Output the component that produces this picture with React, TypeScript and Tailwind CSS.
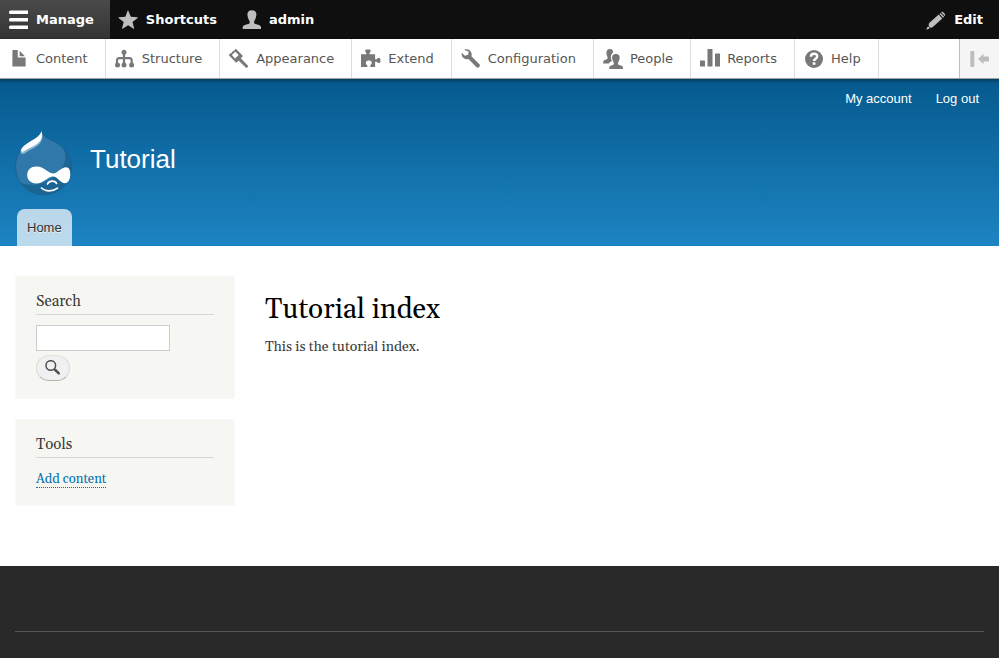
import type { ReactNode } from "react";

function Icon({ children, className = "" }: { children: ReactNode; className?: string }) {
  return (
    <svg viewBox="0 0 20 20" className={`size-5 shrink-0 fill-current ${className}`} aria-hidden="true">
      {children}
    </svg>
  );
}

const icons: Record<string, ReactNode> = {
  content: (
    <>
      <path d="M4 1h4.200c.4 0 .6.2.6.6v6.200c0 .4.2.6.6.6h6.600c.4 0 .6.2.6.6v8c0 .4-.2.6-.6.6H4c-.4 0-.6-.2-.6-.6V1.600c0-.4.2-.6.6-.6z" />
      <path d="M10.600 1.700l5.300 5.500h-5.300z" />
    </>
  ),
  structure: (
    <>
      <circle cx="9" cy="3.300" r="2.500" />
      <circle cx="2.500" cy="16" r="2.500" />
      <circle cx="9" cy="16" r="2.500" />
      <circle cx="16.600" cy="16" r="2.500" />
      <path
        d="M9 4v12M2 15v-3.500c0-1.600.8-2.400 2.300-2.400h10.100c1.500 0 2.300.8 2.300 2.400V15"
        fill="none"
        stroke="currentColor"
        strokeWidth="2.200"
      />
    </>
  ),
  appearance: (
    <>
      <path
        fillRule="evenodd"
        d="M7.300.2l6.200 6.200c.4.4.4.800 0 1.200l-5.600 5.600c-.4.4-.8.4-1.200 0L.3 6.700c-.4-.4-.4-.8 0-1.200L2.200 3.700l.8.300.2-1.300 1.200-1 .9.300.2-1.200.7-.6c.3-.3.800-.3 1.100 0zM6.300 2.700L2.800 6.100l3.200 3.400 3.700-3.400z"
      />
      <path d="M9 11l2.200-2.200 7.800 7.900c.7.700-1.300 2.700-2 2z" />
    </>
  ),
  extend: (
    <path d="M0 5.200h5.300V3.700C4 3.200 3.600.8 5.300.5h3.200c1.800.3 1.400 2.600 0 3.200v1.500h5.600v5h1.600c.6-1.500 3.500-1.700 3.700.2v2c-.1 2-3 1.900-3.700.4h-1.600v5.300H9.300v-1.800c2.200-.9 2-4.500-1-4.700h-1c-3 .2-3 3.800-1 4.700v1.800H0z" />
  ),
  configuration: (
    <path d="M3.100.7C5.500-.1 8.200.3 9.700 2.500c1.100 1.600 1.200 3.100.7 4.800l8 8c1.600 1.700-1.200 4.500-2.900 2.900l-8-8.100c-1.700.5-3.500.2-4.900-1C1 7.700.4 5.700.7 3.700l3.200 3 3.100-.9.800-3z" />
  ),
  people: (
    <>
      <path d="M6.900 0C9.300 0 10.200 1.400 10 3.500 8.200 5 7.500 7.300 8.100 9.800c.2.900.5 1.600.9 2.300-1.300.6-2.400 1-3.100 2.300H.2c0-1-.1-2 .5-2.600.9-1 3.300-.9 3.800-2.200.4-1-.4-2.200-.7-3.300C3 3.200 3.500 0 6.900 0z" />
      <path d="M12.900 4.900c3.200 0 4.300 2.500 3.600 5.100-.3 1.400-.6 2.400-1.300 3.400-.5.900-.3 1.900.5 2.300 1.300.7 3.600.6 4.100 2.200.2.600.2 1.300.2 2H6.200c0-.7 0-1.400.2-2 .5-1.600 2.700-1.500 3.800-2.200.7-.4.900-1.400.4-2.300-.7-1-1-2-1.300-3.400-.7-2.600.4-5.100 3.600-5.100z" />
    </>
  ),
  reports: (
    <>
      <rect x="0" y="11.500" width="5" height="6" rx=".5" />
      <rect x="7.500" y="0" width="5" height="17.500" rx=".5" />
      <rect x="15" y="4.500" width="5" height="13" rx=".5" />
    </>
  ),
  help: (
    <>
      <circle cx="10" cy="10" r="9" />
      <path d="M6.900 7.700c0-4.100 6.300-3.900 6.300-.4 0 2.400-3.100 2.500-3.100 4.700" fill="none" stroke="white" strokeWidth="2.500" />
      <rect x="8.800" y="13.300" width="2.600" height="2.500" fill="white" />
    </>
  ),
};

const trayItems = ["Content", "Structure", "Appearance", "Extend", "Configuration", "People", "Reports", "Help"];

function Toolbar() {
  const tab = "flex h-[39px] items-center gap-2 pl-2 pr-4 font-bold text-white";
  return (
    <nav aria-label="Administration" className="relative font-['DejaVu_Sans',sans-serif] text-[13px] leading-5">
      <div className="flex bg-[#0f0f0f]">
        <button type="button" className={`${tab} bg-linear-to-b from-[#4a4a4a] to-[#343434]`}>
          <Icon>
            <rect x="1" y=".5" width="20" height="3.500" rx="1.500" />
            <rect x="1" y="8" width="20" height="3.500" rx="1.500" />
            <rect x="1" y="15.500" width="20" height="3.500" rx="1.500" />
          </Icon>
          Manage
        </button>
        <button type="button" className={tab}>
          <Icon className="text-[#bebebe]">
            <path d="M10.300.7l2.500 6 6.600.5c.5 0 .5.400.2.700l-5.100 4.200 1.700 6.300c.1.500-.2.600-.6.400L10.100 15.300l-5.500 3.500c-.4.300-.7 0-.6-.4l1.700-6.300L.6 7.900c-.3-.3-.2-.7.200-.7l6.600-.5L9.600.7c.2-.4.500-.4.700 0z" />
          </Icon>
          Shortcuts
        </button>
        <button type="button" className={tab}>
          <Icon className="text-[#bebebe]">
            <path d="M10.900.3c3.800 0 5.100 2.700 4.300 5.700-.3 1.600-.7 3.200-1.600 4.500-.7 1.100-.7 2.600.2 3.200 1.900 1.100 5.200.7 6.100 3.100.3.900.2 1.500.2 2.200H1.700c0-.8-.1-1.400.1-2.200.9-2.400 4.400-2 6.200-3.100.9-.6.900-2.100.2-3.200C7.300 9.200 6.900 7.600 6.600 6 5.900 3 7.100.3 10.900.3z" />
          </Icon>
          admin
        </button>
        <button type="button" className={`${tab} ml-auto`}>
          <Icon className="text-[#bebebe]">
            <path d="M3.200 13.100L12.700 4.600l3.600 3.900-9.500 8.600c-1.200.6-2.400.9-3.300-.1-.9-1-1.100-2.500-.3-3.900zM13.500 3.900l1.100-1 3.600 3.900-1.100 1zM15.300 2.200c.6-.6 1.300-.6 1.900 0l1.700 1.900c.5.600.4 1.300-.2 1.900l-3.600-3.700zM2.100 16.200l1.900 2.100-2.900 1.100c-.6.200-.9-.2-.7-.7z" />
          </Icon>
          Edit
        </button>
      </div>
      <div className="relative flex h-10 border-b border-[#a0a0a0] bg-white text-[#565656] shadow-[0_1px_3px_1px_#00000055]">
        <ul className="flex">
          {trayItems.map((label) => (
            <li key={label} className="border-r border-[#dddddd]">
              <a href="#" className="flex h-full items-center gap-[7px] pl-[9px] pr-[17px]">
                <Icon className="text-[#787878]">{icons[label.toLowerCase()]}</Icon>
                {label}
              </a>
            </li>
          ))}
        </ul>
        <button
          type="button"
          aria-label="Vertical orientation"
          className="ml-auto flex w-10 items-center justify-center border-l border-[#bebebe] bg-[#f5f5f5] text-[#bebebe]"
        >
          <Icon>
            <rect x=".3" y="2" width="4" height="16" rx=".5" />
            <path d="M8 10l5.500-5.200v2.700h5c.3 0 .5.200.5.500v4c0 .3-.2.500-.5.500h-5v2.700z" />
          </Icon>
        </button>
      </div>
    </nav>
  );
}

function Druplicon() {
  return (
    <svg viewBox="0 0 64 73" className="h-[73px] w-16" role="img" aria-label="Home">
      <path
        d="M31.700 5.300c.8 4 3.800 6.300 8 8 6 2.400 11.300 5.600 15.300 10.700 4.400 5.500 6.600 10.500 6.600 17C61.600 57 49.500 68.800 33.800 68.800S5.600 57 5.600 40.500c0-8.500 3-14 8-19.500 5-4.500 15.600-7 18.100-15.700z"
        fill="#2f78a9"
      />
      <path
        d="M51 20c1.500 1.200 2.700 2.500 4 4 4.400 5.500 6.600 10.500 6.600 17C61.600 57 49.500 68.800 33.800 68.800 24.500 68.800 16.300 64.500 11 57c13 4.500 27 .5 36.500-9.500 8.500-9 11-19.500 3.500-27.500z"
        fill="#1b6494"
      />
      <path
        d="M31.700 5.300c.8 4 3.800 6.300 8 8 6 2.400 11.300 5.600 15.300 10.700 4.400 5.500 6.600 10.500 6.600 17C61.600 57 49.500 68.800 33.800 68.800S5.600 57 5.600 40.500c0-8.500 3-14 8-19.500"
        fill="none"
        stroke="#175e8d"
        strokeWidth=".8"
      />
      <path d="M31.700 5.500c1.500 5.500.8 9.500-3 13-3.700 3.500-9.700 5.500-14.200 9-3.500 1.500-5-1.500-3-4.500C16 16 28.500 14 31.700 5.500z" fill="#8fb8d3" />
      <path d="M31.700 5.300c1 5 0 8.700-4 12-4 3.200-9.200 4.700-13.700 8-2.500 1.300-4-.3-2.200-2.700C16.500 15.500 28.500 13.500 31.700 5.300z" fill="white" />
      <path
        d="M26.500 40.500c8 0 11.500 6.900 16.500 6.900 4.500 0 8-6.200 13-6.200 3 0 4.300 2.900 4.300 6.700 0 5-2 9.300-5.300 9.300-4.200 0-7.500-6.800-12-6.800-5 0-9.500 7-17 7-5 0-8.800-3.300-8.800-8.400s3.800-8.500 9.300-8.500z"
        fill="white"
      />
      <path d="M37.500 58c1.500-3.500 7.500-3.900 9-.6M31.500 62c4 3.800 11.500 3.800 16 .2" fill="none" stroke="white" strokeWidth="1.700" strokeLinecap="round" />
    </svg>
  );
}

function Block({ title, className, children }: { title: string; className: string; children: ReactNode }) {
  return (
    <section className={`border border-[#f9f9f9] bg-[#f6f6f2] px-5 pt-[14px] ${className}`}>
      <h2 className="mb-[10px] border-b border-[#d6d6d6] pb-[2px] text-[15px] leading-[21px]">{title}</h2>
      {children}
    </section>
  );
}

export default function App() {
  return (
    <div className="flex min-h-screen flex-col bg-white font-[Gelasio,Georgia,'Liberation_Serif',serif] text-[#3b3b3b]">
      <Toolbar />
      <header className="bg-linear-to-b from-[#055a8e] to-[#1d84c3] px-[15px] font-['Liberation_Sans',Arial,sans-serif] text-white">
        <nav aria-label="User account" className="flex justify-end gap-6 pr-[5px] pt-[10px] text-[13px] leading-5">
          <a href="#">My account</a>
          <a href="#">Log out</a>
        </nav>
        <div className="-ml-[5px] mt-[17px] flex gap-4">
          <a href="#">
            <Druplicon />
          </a>
          <a href="#" className="pt-[18px] text-[26px] leading-[30px]">
            Tutorial
          </a>
        </div>
        <nav aria-label="Main" className="ml-[2px] mt-[10px] flex">
          <a
            href="#"
            className="rounded-t-lg bg-white/70 px-[10px] pt-[9px] pb-2 text-[13px] leading-5 text-[#333333] text-shadow-[0_1px_0_#eeeeee]"
          >
            Home
          </a>
        </nav>
      </header>
      <div className="flex gap-[30px] px-[15px] pt-[30px] pb-[60px]">
        <aside className="flex w-[220px] shrink-0 flex-col gap-5">
          <Block title="Search" className="pb-[17px]">
            <form className="flex flex-col items-start gap-1">
              <input type="search" aria-label="Search" className="h-[26px] w-[134px] border border-[#cccccc] bg-white px-1 text-sm" />
              <button
                type="button"
                aria-label="Search"
                className="flex h-[26px] w-[34px] items-center justify-center rounded-full border border-[#d8d8d8] border-t-[#e4e4e4] border-b-[#b4b4b4] bg-[#f0f0f0]"
              >
                <svg viewBox="0 0 16 16" className="size-4" fill="none" stroke="#505050" aria-hidden="true">
                  <circle cx="5.800" cy="5.500" r="4.800" strokeWidth="1.500" />
                  <path d="M9 9l1.500 1.500" strokeWidth="1.500" />
                  <path d="M10.300 10l3.500 3.400" strokeWidth="2.500" strokeLinecap="round" />
                </svg>
              </button>
            </form>
          </Block>
          <Block title="Tools" className="pb-[17px]">
            <ul className="pt-1">
              <li className="flex h-4">
                <a href="#" className="border-b border-dotted border-[#0071b3] text-[13px] leading-[14px] text-[#0071b3]">
                  Add content
                </a>
              </li>
            </ul>
          </Block>
        </aside>
        <main className="pt-4">
          <h1 className="text-[28px] leading-9 text-black">Tutorial index</h1>
          <p className="mt-2 text-[14px] leading-[22px]">This is the tutorial index.</p>
        </main>
      </div>
      <footer className="flex-1 bg-[#292929] px-[15px] pt-[65px]">
        <div className="border-t border-[#555555]" />
      </footer>
    </div>
  );
}
